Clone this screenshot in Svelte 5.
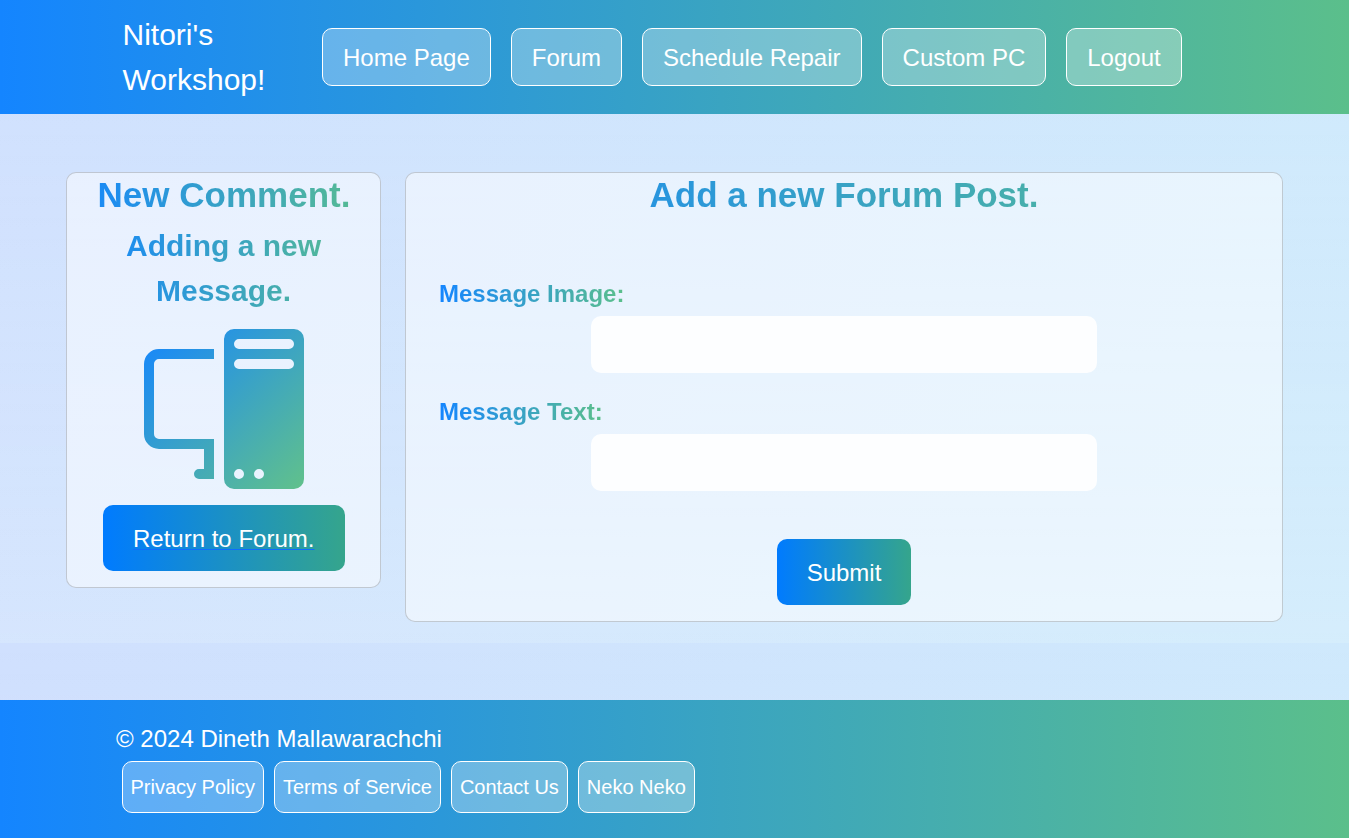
<script>
  const navLinks = ['Home Page', 'Forum', 'Schedule Repair', 'Custom PC', 'Logout'];
  const footerLinks = ['Privacy Policy', 'Terms of Service', 'Contact Us', 'Neko Neko'];
  const fields = [
    { id: 'image', label: 'Message Image:' },
    { id: 'text', label: 'Message Text:' }
  ];
</script>

<div class="page">
  <header>
    <a class="brand" href="#home">Nitori's Workshop!</a>
    <nav>
      {#each navLinks as link}
        <a class="pill" href="#nav">{link}</a>
      {/each}
    </nav>
  </header>

  <main>
    <section class="card side">
      <h1 class="tint">New Comment.</h1>
      <h2 class="tint">Adding a new Message.</h2>
      <svg class="pc" viewBox="0 0 16 16" aria-hidden="true">
        <defs>
          <linearGradient id="pc-fill" x1="0" y1="0" x2="16" y2="16" gradientUnits="userSpaceOnUse">
            <stop offset="0" stop-color="#1485ff" />
            <stop offset="1" stop-color="#61c18b" />
          </linearGradient>
        </defs>
        <path
          fill="url(#pc-fill)"
          d="M8 1a1 1 0 0 1 1-1h6a1 1 0 0 1 1 1v14a1 1 0 0 1-1 1H9a1 1 0 0 1-1-1zm1 13.5a.5.5 0 1 0 1 0 .5.5 0 0 0-1 0m2 0a.5.5 0 1 0 1 0 .5.5 0 0 0-1 0M9.5 1a.5.5 0 0 0 0 1h5a.5.5 0 0 0 0-1zM9 3.5a.5.5 0 0 0 .5.5h5a.5.5 0 0 0 0-1h-5a.5.5 0 0 0-.5.5M1.5 2A1.5 1.5 0 0 0 0 3.5v7A1.5 1.5 0 0 0 1.5 12H6v2h-.5a.5.5 0 0 0 0 1H7v-4H1.5a.5.5 0 0 1-.5-.5v-7a.5.5 0 0 1 .5-.5H7V2z"
        />
      </svg>
      <a class="button" href="#forum"><span>Return to Forum.</span></a>
    </section>

    <section class="card post">
      <h1 class="tint">Add a new Forum Post.</h1>
      <form onsubmit={(e) => e.preventDefault()}>
        {#each fields as field}
          <label class="tint" for={field.id}>{field.label}</label>
          <input id={field.id} type="text" />
        {/each}
        <button class="button" type="submit">Submit</button>
      </form>
    </section>
  </main>

  <footer>
    <p>© 2024 Dineth Mallawarachchi</p>
    <div class="links">
      {#each footerLinks as link}
        <a class="pill small" href="#info">{link}</a>
      {/each}
    </div>
  </footer>
</div>

<style>
  :global(body) {
    margin: 0;
  }

  .page {
    display: flex;
    flex-direction: column;
    height: 838px;
    overflow: hidden;
    font: 24px/36px 'Liberation Sans', Arial, sans-serif;
    background:
      linear-gradient(180deg, rgba(255, 255, 255, 0), rgba(255, 255, 255, 0.12)) 0 0 / 100% 643px repeat-y,
      linear-gradient(115deg, #d0e0fe, #cfebfc) 0 0 / 100% 643px repeat-y;
  }

  *,
  *::before {
    box-sizing: border-box;
  }

  a {
    color: #fff;
    text-decoration: none;
  }

  h1,
  h2,
  p {
    margin: 0;
  }

  header,
  footer {
    background: linear-gradient(90deg, #1485ff, #5bbf8b);
    color: #fff;
  }

  header {
    display: flex;
    align-items: center;
    height: 114px;
    flex: none;
    padding-left: 122.5px;
  }

  .brand {
    width: 199.5px;
    padding-right: 40px;
    font-size: 30px;
    line-height: 45px;
  }

  nav {
    display: flex;
    gap: 20px;
  }

  .pill {
    padding: 11px 20px 9px;
    border: 1px solid #fff;
    border-radius: 10px;
    background: rgba(255, 255, 255, 0.3);
    white-space: nowrap;
  }

  .pill.small {
    padding: 10px 8.5px 10px 7.5px;
    font-size: 20px;
    line-height: 30px;
  }

  main {
    display: grid;
    grid-template-columns: 315px 878px;
    gap: 24px;
    align-items: start;
    flex: 1;
    padding: 58px 66px 0;
  }

  .card {
    border: 1px solid rgba(0, 0, 0, 0.175);
    border-radius: 10px;
    background: rgba(255, 255, 255, 0.5);
    text-align: center;
  }

  .side {
    display: flex;
    flex-direction: column;
    align-items: center;
    height: 416px;
    padding-left: 1px;
  }

  .post {
    height: 450px;
  }

  .tint {
    background: linear-gradient(90deg, #1485ff, #5bbf8b);
    -webkit-background-clip: text;
    background-clip: text;
    color: transparent;
    font-weight: 700;
  }

  h1 {
    width: 100%;
    font-size: 35px;
    line-height: 43px;
  }

  h2 {
    width: 281px;
    margin-top: 7px;
    padding: 0 30.5px 0 29.5px;
    font-size: 30px;
    line-height: 45px;
  }

  .pc {
    width: 160px;
    height: 160px;
    margin: 16px 0;
  }

  .button {
    padding: 16px 30px 14px;
    border: 0;
    border-radius: 10px;
    background: linear-gradient(90deg, #007bff, #35a58c);
    color: #fff;
    font: inherit;
  }

  .side .button {
    width: 242px;
    padding-right: 0;
    text-align: left;
  }

  .button span {
    text-decoration: underline #0d6efd 1px;
    text-underline-offset: 2px;
  }

  form {
    display: flex;
    flex-direction: column;
    align-items: center;
    padding: 60px 33px 0;
  }

  label {
    align-self: flex-start;
  }

  input {
    width: 506px;
    height: 57px;
    margin: 4px 0 21px;
    padding: 10px;
    border: 0;
    border-radius: 10px;
    background: rgba(255, 255, 255, 0.9);
    font: inherit;
  }

  form .button {
    margin-top: 27px;
  }

  footer {
    flex: none;
    height: 138px;
    padding: 21px 116px 0;
  }

  p {
    margin-bottom: 4px;
  }

  .links {
    display: flex;
    gap: 10px;
    padding-left: 6px;
  }
</style>
